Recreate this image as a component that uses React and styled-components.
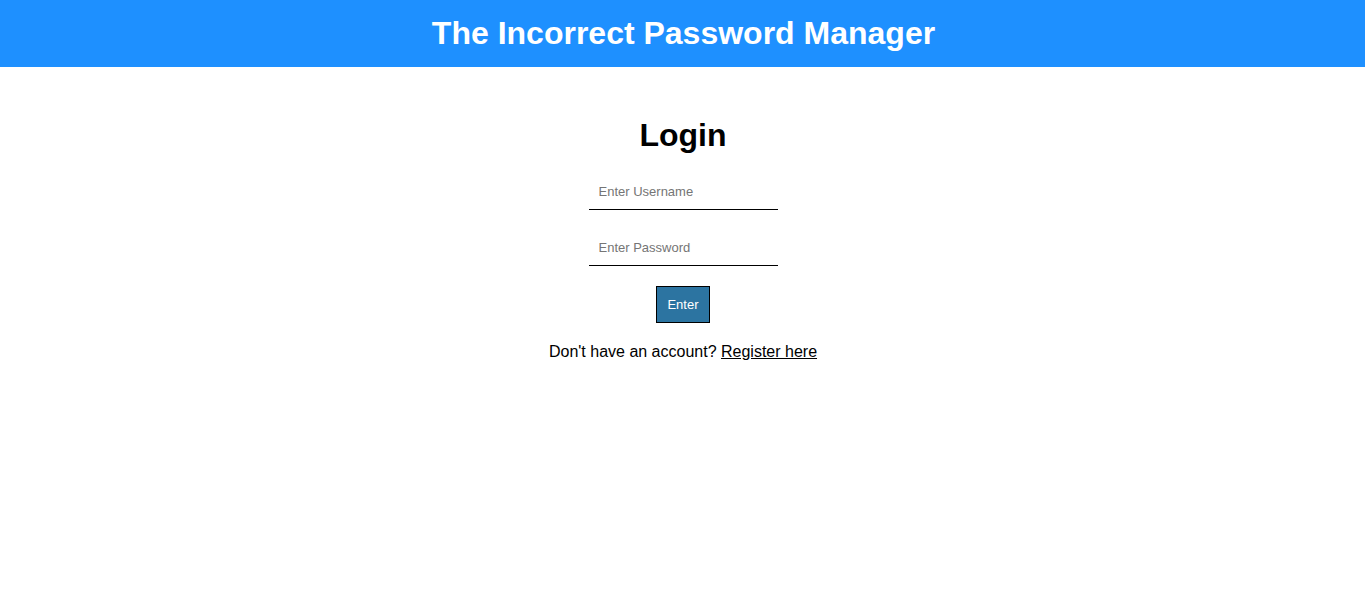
import React from 'react';
import styled, { createGlobalStyle } from 'styled-components';

const GlobalStyle = createGlobalStyle`
  body {
    margin: 0;
    background: #fff;
    font-family: "Liberation Sans", Arial, sans-serif;
  }
`;

const Header = styled.header`
  height: 67px;
  background-color: #1e90ff;
  display: flex;
  align-items: center;
  justify-content: center;
`;

const Title = styled.h1`
  margin: 0 0 0 2px;
  color: #fff;
  font-size: 32px;
  font-weight: bold;
`;

const Form = styled.form`
  display: flex;
  flex-direction: column;
  align-items: center;
  gap: 19px;
  padding-top: 50px;
  padding-left: 1px;
`;

const Heading = styled.h2`
  margin: 0;
  font-size: 32px;
  line-height: 37px;
  font-weight: bold;
  color: #000;
`;

const Input = styled.input`
  width: 189px;
  height: 37px;
  box-sizing: border-box;
  border: none;
  border-bottom: 1px solid #000;
  padding: 0 10px;
  font-family: "Liberation Sans", Arial, sans-serif;
  font-size: 13px;
  outline: none;

  &::placeholder {
    color: #757575;
  }
`;

const Button = styled.button`
  margin-top: 1px;
  height: 37px;
  padding: 0 10px;
  border: 1px solid #000;
  background-color: #2c74a1;
  color: #fff;
  font-family: "Liberation Sans", Arial, sans-serif;
  font-size: 13px;
  cursor: pointer;
`;

const Note = styled.p`
  margin: 1px 0 0;
  font-size: 16px;
  line-height: 18px;
  color: #000;

  a {
    color: #000;
  }
`;

export default function App() {
  return (
    <>
      <GlobalStyle />
      <Header>
        <Title>The Incorrect Password Manager</Title>
      </Header>
      <Form onSubmit={(e) => e.preventDefault()}>
        <Heading>Login</Heading>
        <Input type="text" placeholder="Enter Username" />
        <Input type="password" placeholder="Enter Password" />
        <Button type="submit">Enter</Button>
        <Note>
          Don't have an account? <a href="#">Register here</a>
        </Note>
      </Form>
    </>
  );
}
